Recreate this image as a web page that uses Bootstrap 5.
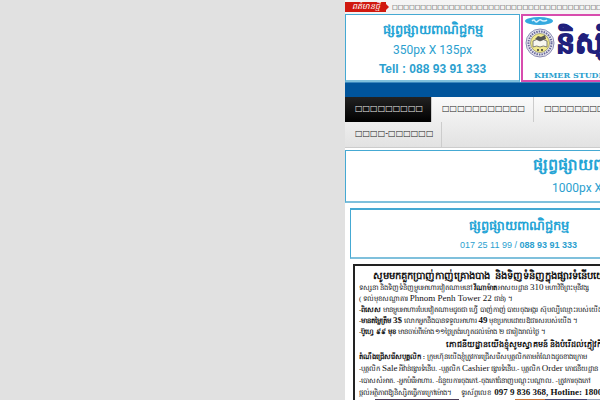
<!DOCTYPE html>
<html lang="km">
<head>
<meta charset="utf-8">
<meta name="viewport" content="width=device-width, initial-scale=1">
<title>Khmer Student</title>
<link href="https://cdn.jsdelivr.net/npm/bootstrap@5.3.0/dist/css/bootstrap.min.css" rel="stylesheet">
<style>
body{background:#e1e1e1;font-family:"Liberation Sans",Arial,sans-serif;font-size:12px;line-height:16px;overflow:hidden}
.site{width:500px;margin-left:345px;background:#fff}
.site a{text-decoration:none}
.ticker{height:14px;background:#f4f4f4}
.ticker-label{width:41px;height:10px;background:#d0190f;color:#fff;font-size:8px;line-height:10px;font-style:italic}
.ticker-tip{border:3px solid transparent;border-left-color:#d0190f}
.ticker-text{font-family:"DejaVu Sans",sans-serif;font-size:6px;line-height:10px;color:#222}
.ad{border:1px solid #45a9d3;border-bottom:2px solid #7fc0dc;color:#2c9fcf;background:#fff}
.ad-small{width:175px;height:68px;margin-right:1px}
.ad-wide{height:53px;margin-top:2px}
.ad-mid{width:337px;height:51px;margin:5px 0 5px 5px;padding-top:5px;border-top-width:2px}
.ad-title{font-weight:700;font-size:13px;line-height:22px;color:#25a4d5}
.ad-title-lg{font-size:16px;line-height:28px}
.ad-size{font-family:Roboto,sans-serif;font-size:12px;line-height:18px}
.ad-tel{font-size:12px;line-height:20px;font-weight:700}
.ad-note{font-size:9px;line-height:16px}
.brand-box{height:68px;padding-left:1px;border:2px solid #d84cae}
.brand-art{width:32px;height:46px}
.brand-name{font-weight:700;font-size:30px;line-height:53px;color:#20207c;-webkit-text-stroke:1px #20207c}
.brand-sub{font-family:"DejaVu Serif",serif;font-weight:700;font-size:8px;line-height:12px;color:#2c9fcf;padding-left:10px}
.bluebar{height:15px;background:#00549b;border-top:1px solid #3a87bd}
.menu{background:linear-gradient(#fafafa,#e2e2e2);border-bottom:1px solid #ccc}
.menu a{height:25px;padding:0 8px 0 10px;font-family:"DejaVu Sans",sans-serif;font-size:8px;line-height:24px;color:#222;border-right:1px solid #ccc}
.menu a.current{background:linear-gradient(#222,#000);color:#eee}
.paper{width:380px;margin-left:8px;padding:3px 4px;border:2px solid #222;color:#111;font-family:"Liberation Serif",serif;font-size:7px;line-height:12px}
.paper-head{font-size:10px;line-height:14px;font-weight:700;padding-left:14px}
.paper-intro{line-height:11px;padding-bottom:1px}
.paper-invite{font-size:8px;padding-left:87px}
.latin{font-size:9px;line-height:1}
.photo{height:12px}
.photo-a{width:84px;background:#4c3c58}
.photo-b{width:120px;background:linear-gradient(90deg,#c9763d 25%,#4d4a74 25% 60%,#9aa4b8 60%)}
</style>
<script src="https://cdn.jsdelivr.net/npm/bootstrap@5.3.0/dist/js/bootstrap.bundle.min.js"></script>
</head>
<body>
<main class="site text-nowrap">
<div class="ticker d-flex align-items-center"><span class="ticker-label text-center">ពត៌មានថ្មី</span><span class="ticker-tip"></span><span class="ticker-text">□□□□□□□□□□□□□□□□□□□□□□□□□□□□□□□□□□□□□□□</span></div>
<header class="d-flex">
<a href="#" class="ad ad-small d-block text-center pt-1"><div class="ad-title">ផ្សព្វផ្សាយពាណិជ្ជកម្ម</div><div class="ad-size">350px X 135px</div><div class="ad-tel">Tell : 088 93 91 333</div></a>
<a href="#" class="brand-box flex-fill">
<div class="d-flex">
<svg class="brand-art" viewBox="0 0 32 46" aria-hidden="true"><ellipse cx="15" cy="5" rx="14" ry="4" fill="#35a9df"/><path d="M8 5q2-2 3 0t3 0 3-1 3 1 3-1" fill="none" stroke="#d9f2ff" stroke-width="1.5"/><circle cx="16" cy="27" r="14" fill="#e8e8ef" stroke="#8d8db4"/><circle cx="16" cy="27" r="11.5" fill="none" stroke="#6a6a9c" stroke-width="2" stroke-dasharray="1.5 1"/><circle cx="16" cy="27" r="9.5" fill="#f1e98c" stroke="#77774e" stroke-width=".6"/><path d="M9 25q4-3 7 0 3-3 7 0v6q-4-2-7 0-3-2-7 0z" fill="#f7f7ef" stroke="#666" stroke-width=".8"/><path d="M11 23l3-3 3 1 4-2 1 4-6 2z" fill="#555"/><path d="M13 34h2m2 0h2" stroke="#333" stroke-width="1.5"/></svg>
<div class="brand-name">និស្សិតខ្មែរ</div></div>
<div class="brand-sub">KHMER STUDENT</div></a>
</header>
<div class="bluebar"></div>
<nav class="menu"><div class="d-flex"><a class="current" href="#">□□□□□□□□□</a><a href="#">□□□□□□□□□□□</a><a href="#">□□□□□□□□□</a></div><div class="d-flex"><a href="#">□□□□-□□□□□□</a></div></nav>
<a href="#" class="ad ad-wide d-block text-center"><div class="ad-title ad-title-lg">ផ្សព្វផ្សាយពាណិជ្ជកម្ម</div><div class="ad-size">1000px X 100px</div></a>
<a href="#" class="ad ad-mid d-block text-center"><div class="ad-title">ផ្សព្វផ្សាយពាណិជ្ជកម្ម</div><div class="ad-note">017 25 11 99 / <b>088 93 91 333</b></div></a>
<article class="paper">
<div class="paper-head">សូមមកគួកប្រាញ់កាញ់គ្រោងបាង &nbsp;និងទិញទំនិញក្នុងផ្សារទំនើបយើង</div>
<div class="paper-intro">
<div>ទស្សនា និងទិញទំនិញម្ហូបអាហារវៀតណាមនៅ <b>វីណាម៉ាត</b> អាសយដ្ឋាន <span class="latin">310</span> មហាវិថីព្រះមុនីវង្ស</div>
<div>( ទល់មុខសណ្ឋាគារ <span class="latin">Phnom Penh Tower 22</span> ជាន់) ។</div>
<div><b>-ពិសេស</b> មានម្ហូបអាហារបែបវៀតណាមដូចជា ហ្វើ បាញ់កាញ់ បាយចុងអង្ករ ស៊ុបល្បីឈ្មោះរបស់យើង</div>
<div><b>-មានតម្លៃត្រឹម <span class="latin">3$</span></b> លោកអ្នកនឹងបានទទួលអាហារ <b class="latin">49</b> មុខប្រកបដោយឱជារសរបស់យើង ។</div>
<div><b>-ប៊ូហ្វេ ៩៩ មុខ</b> មានចាប់ពីម៉ោង ១១ថ្ងៃត្រង់រហូតដល់ម៉ោង ២ ជារៀងរាល់ថ្ងៃ ។</div>
</div>
<div class="paper-invite"><b>ភោជនីយដ្ឋានយើងខ្ញុំសូមស្វាគមន៍ និងបំរើដល់ភ្ញៀវកិត្តិយស</b></div>
<div><b>តំណឹងជ្រើសរើសបុគ្គលិក :</b> ក្រុមហ៊ុនយើងខ្ញុំត្រូវការជ្រើសរើសបុគ្គលិកតាមតំណែងដូចខាងក្រោម</div>
<div>-បុគ្គលិក <span class="latin">Sale</span> អីវ៉ាន់ផ្សារទំនើប. -បុគ្គលិក <span class="latin">Cashier</span> ផ្សារទំនើប.- បុគ្គលិក <span class="latin">Order</span> ភោជនីយដ្ឋាន</div>
<div>-បោសសំអាត. -អ្នកបំរើអាហារ. -ជំនួយការចុងភៅ.-ចុងភៅជំនាញបណ្តុះបណ្តាល. -ត្រូវការចុងភៅ</div>
<div>ផ្តល់អត្ថិភាពឱ្យនិស្សិតធ្វើការក្រៅម៉ោង។ &nbsp; &nbsp; ទូរស័ព្ទលេខ &nbsp;<b class="latin">097 9 836 368, Hotline: 1800</b></div>
<div class="d-flex ps-3"><div class="photo photo-a me-5"></div><div class="photo photo-b ms-2"></div></div>
</article>
</main>
</body>
</html>
